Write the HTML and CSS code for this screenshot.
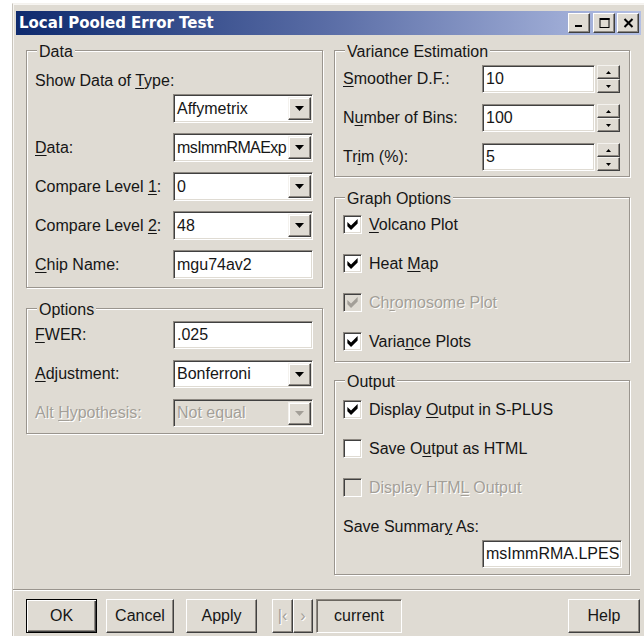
FILE: index.html
```html
<!DOCTYPE html>
<html>
<head>
<meta charset="utf-8">
<title>Local Pooled Error Test</title>
<link rel="stylesheet" href="styles.css">
</head>
<body>
<div class="window">
  <div class="titlebar">
    <span class="title">Local Pooled Error Test</span>
    <div class="caption-btns">
      <span class="cbtn"><svg width="10" height="10" viewBox="0 0 10 10"><rect x="1" y="7" width="7" height="2" fill="#000"/></svg></span>
      <span class="cbtn"><svg width="11" height="10" viewBox="0 0 11 10"><rect x="1" y="0.5" width="9" height="9" fill="none" stroke="#000" stroke-width="1"/><rect x="1" y="0" width="9.5" height="2" fill="#000"/></svg></span>
      <span class="cbtn close"><svg width="11" height="10" viewBox="0 0 11 10"><path d="M1.5 1 L9.5 9 M9.5 1 L1.5 9" stroke="#000" stroke-width="2"/></svg></span>
    </div>
  </div>

  <div class="client">
    <div class="columns">
      <!-- left column: data selection and test options -->
      <div class="col col-left">
        <fieldset class="group g-data">
          <legend>Data</legend>
          <div class="caption-line">Show Data of <u>T</u>ype:</div>
          <div class="row row-tight">
            <span class="lbl"></span>
            <div class="combo"><span class="value">Affymetrix</span><span class="drop"><svg width="9" height="5" viewBox="0 0 9 5"><path d="M0 0 H9 L4.5 5 Z" fill="#000"/></svg></span></div>
          </div>
          <div class="row">
            <span class="lbl"><u>D</u>ata:</span>
            <div class="combo"><span class="value condensed">msImmRMAExp</span><span class="drop"><svg width="9" height="5" viewBox="0 0 9 5"><path d="M0 0 H9 L4.5 5 Z" fill="#000"/></svg></span></div>
          </div>
          <div class="row">
            <span class="lbl">Compare Level <u>1</u>:</span>
            <div class="combo"><span class="value">0</span><span class="drop"><svg width="9" height="5" viewBox="0 0 9 5"><path d="M0 0 H9 L4.5 5 Z" fill="#000"/></svg></span></div>
          </div>
          <div class="row">
            <span class="lbl">Compare Level <u>2</u>:</span>
            <div class="combo"><span class="value">48</span><span class="drop"><svg width="9" height="5" viewBox="0 0 9 5"><path d="M0 0 H9 L4.5 5 Z" fill="#000"/></svg></span></div>
          </div>
          <div class="row">
            <span class="lbl"><u>C</u>hip Name:</span>
            <div class="edit wide"><span class="value">mgu74av2</span></div>
          </div>
        </fieldset>

        <fieldset class="group g-options">
          <legend>Options</legend>
          <div class="row row-first row-28">
            <span class="lbl"><u>F</u>WER:</span>
            <div class="edit wide"><span class="value">.025</span></div>
          </div>
          <div class="row row-28">
            <span class="lbl"><u>A</u>djustment:</span>
            <div class="combo"><span class="value">Bonferroni</span><span class="drop"><svg width="9" height="5" viewBox="0 0 9 5"><path d="M0 0 H9 L4.5 5 Z" fill="#000"/></svg></span></div>
          </div>
          <div class="row row-28">
            <span class="lbl disabled">Alt <u>H</u>ypothesis:</span>
            <div class="combo is-disabled"><span class="value">Not equal</span><span class="drop"><svg width="9" height="5" viewBox="0 0 9 5"><path d="M0 0 H9 L4.5 5 Z" fill="#a39f98"/></svg></span></div>
          </div>
        </fieldset>
      </div>

      <!-- right column: estimation, graphs and output -->
      <div class="col col-right">
        <fieldset class="group g-variance">
          <legend>Variance Estimation</legend>
          <div class="row row-first row-28">
            <span class="lbl lbl-r"><u>S</u>moother D.F.:</span>
            <div class="edit spin-edit"><span class="value">10</span></div>
            <div class="spin"><span class="sbtn"><svg width="5" height="3" viewBox="0 0 5 3"><path d="M0 3 H5 L2.5 0 Z" fill="#000"/></svg></span><span class="sbtn"><svg width="5" height="3" viewBox="0 0 5 3"><path d="M0 0 H5 L2.5 3 Z" fill="#000"/></svg></span></div>
          </div>
          <div class="row row-28">
            <span class="lbl lbl-r">N<u>u</u>mber of Bins:</span>
            <div class="edit spin-edit"><span class="value">100</span></div>
            <div class="spin"><span class="sbtn"><svg width="5" height="3" viewBox="0 0 5 3"><path d="M0 3 H5 L2.5 0 Z" fill="#000"/></svg></span><span class="sbtn"><svg width="5" height="3" viewBox="0 0 5 3"><path d="M0 0 H5 L2.5 3 Z" fill="#000"/></svg></span></div>
          </div>
          <div class="row row-28">
            <span class="lbl lbl-r">Tr<u>i</u>m (%):</span>
            <div class="edit spin-edit"><span class="value">5</span></div>
            <div class="spin"><span class="sbtn"><svg width="5" height="3" viewBox="0 0 5 3"><path d="M0 3 H5 L2.5 0 Z" fill="#000"/></svg></span><span class="sbtn"><svg width="5" height="3" viewBox="0 0 5 3"><path d="M0 0 H5 L2.5 3 Z" fill="#000"/></svg></span></div>
          </div>
        </fieldset>

        <fieldset class="group g-graph">
          <legend>Graph Options</legend>
          <div class="row check-row row-first">
            <span class="checkbox"><svg width="11" height="11" viewBox="0 0 7 7.5"><path d="M0 2 L2.5 4.5 L7 0 L7 3 L2.5 7.5 L0 5 Z" fill="#000"/></svg></span>
            <span class="clabel"><u>V</u>olcano Plot</span>
          </div>
          <div class="row check-row">
            <span class="checkbox"><svg width="11" height="11" viewBox="0 0 7 7.5"><path d="M0 2 L2.5 4.5 L7 0 L7 3 L2.5 7.5 L0 5 Z" fill="#000"/></svg></span>
            <span class="clabel">Heat <u>M</u>ap</span>
          </div>
          <div class="row check-row">
            <span class="checkbox is-disabled"><svg width="11" height="11" viewBox="0 0 7 7.5"><path d="M0 2 L2.5 4.5 L7 0 L7 3 L2.5 7.5 L0 5 Z" fill="#a39f98"/></svg></span>
            <span class="clabel disabled">Ch<u>r</u>omosome Plot</span>
          </div>
          <div class="row check-row">
            <span class="checkbox"><svg width="11" height="11" viewBox="0 0 7 7.5"><path d="M0 2 L2.5 4.5 L7 0 L7 3 L2.5 7.5 L0 5 Z" fill="#000"/></svg></span>
            <span class="clabel">Varia<u>n</u>ce Plots</span>
          </div>
        </fieldset>

        <fieldset class="group g-output">
          <legend>Output</legend>
          <div class="row check-row row-first">
            <span class="checkbox"><svg width="11" height="11" viewBox="0 0 7 7.5"><path d="M0 2 L2.5 4.5 L7 0 L7 3 L2.5 7.5 L0 5 Z" fill="#000"/></svg></span>
            <span class="clabel">Display <u>O</u>utput in S-PLUS</span>
          </div>
          <div class="row check-row">
            <span class="checkbox"></span>
            <span class="clabel">Save O<u>u</u>tput as HTML</span>
          </div>
          <div class="row check-row">
            <span class="checkbox is-disabled"></span>
            <span class="clabel disabled">Display HTM<u>L</u> Output</span>
          </div>
          <div class="caption-line summary-line">Save Summar<u>y</u> As:</div>
          <div class="summary-field">
            <div class="edit wide"><span class="value">msImmRMA.LPES</span></div>
          </div>
        </fieldset>
      </div>
    </div>

    <!-- dialog button bar -->
    <div class="footer">
      <span class="btn btn-default">OK</span>
      <span class="btn btn-cancel">Cancel</span>
      <span class="btn btn-apply">Apply</span>
      <span class="btn btn-nav btn-first disabled">|‹</span>
      <span class="btn btn-nav btn-next disabled">›</span>
      <span class="current">current</span>
      <span class="spacer"></span>
      <span class="btn btn-help">Help</span>
    </div>
  </div>
</div>
</body>
</html>
```

FILE: styles.css
```css
* { box-sizing: border-box; }

html, body {
  margin: 0;
  padding: 0;
  background: #ffffff;
}

body {
  font-family: "Liberation Sans", Arial, sans-serif;
  font-size: 16px;
  line-height: 20px;
  color: #161616;
}

u { text-underline-offset: 2px; }

.window {
  margin: 3px 0 0 12px;
  width: 632px;
  height: 633px;
  background: #dfdbd3;
  border-top: 1px solid #f4f2ee;
  border-left: 1px solid #c9c5bd;
  box-shadow: inset 1px 1px 0 #f7f5f2;
  overflow: hidden;
}

/* caption bar */
.titlebar {
  margin: 7px 3px 0 3px;
  height: 24px;
  display: flex;
  align-items: center;
  justify-content: space-between;
  background: linear-gradient(to right, #0e2a6e 0%, #5a6da6 50%, #b3bfe4 100%);
  padding: 0 2px 0 3px;
}

.title {
  font-family: "DejaVu Sans", Verdana, sans-serif;
  font-weight: bold;
  font-size: 15px;
  color: #ffffff;
  line-height: 24px;
}

.caption-btns {
  display: flex;
  gap: 3px;
}

.cbtn {
  width: 22px;
  height: 20px;
  display: flex;
  align-items: center;
  justify-content: center;
  background: #dfdbd3;
  border: 1px solid;
  border-color: #ffffff #404040 #404040 #ffffff;
  box-shadow: inset -1px -1px 0 #8d8881;
}

.cbtn.close { margin-left: -1px; }

/* client area */
.client {
  padding: 4px 0 0 13px;
}

.columns {
  display: flex;
  gap: 11px;
  align-items: flex-start;
}

.col { display: flex; flex-direction: column; }
.col-left { width: 297px; }
.col-right { width: 296px; }

/* etched group boxes */
.group {
  margin: 0;
  padding: 0 0 0 8px;
  border: 1px solid #9a958e;
  box-shadow: inset 1px 1px 0 #ffffff, 1px 1px 0 #ffffff;
  min-width: 0;
}

.group legend {
  margin-left: 2px;
  padding: 4px 2px 0 2px;
  line-height: 18px;
  background: #dfdbd3;
}

.g-data { padding-bottom: 8px; }
.g-options { margin-top: 9px; padding-bottom: 6px; }
.g-variance { padding-bottom: 5px; }
.g-graph { margin-top: 9px; padding-bottom: 5px; }
.g-output { margin-top: 7px; padding-bottom: 6px; }

.caption-line {
  margin-top: 10px;
  height: 20px;
}

.row {
  display: flex;
  align-items: center;
  height: 29px;
  margin-top: 10px;
}

.row-28 { height: 28px; margin-top: 11px; }
.row-tight { margin-top: 3px; }

.g-options .row-first { margin-top: 2px; }
.g-variance .row-first { margin-top: 4px; }
.g-graph .row-first { margin-top: 2px; }
.g-output .row-first { margin-top: 4px; }

.lbl {
  flex: none;
  width: 138px;
  white-space: nowrap;
}

.lbl-r { width: 139px; }

.disabled {
  color: #a39f98;
  text-shadow: 1px 1px 0 #ffffff;
}

/* sunken fields */
.edit, .combo {
  height: 100%;
  display: flex;
  align-items: center;
  background: #ffffff;
  border: 1px solid;
  border-color: #8d8881 #ffffff #ffffff #8d8881;
  box-shadow: inset 1px 1px 0 #404040, inset -1px -1px 0 #dfdbd3;
  overflow: hidden;
}

.combo, .wide { width: 140px; }

.value {
  flex: 1;
  min-width: 0;
  padding-left: 3px;
  white-space: nowrap;
  overflow: hidden;
}

.value.condensed { letter-spacing: -0.6px; }

.drop {
  flex: none;
  width: 23px;
  height: 23px;
  margin-right: 1px;
  display: flex;
  align-items: center;
  justify-content: center;
  background: #dfdbd3;
  border: 1px solid;
  border-color: #f4f2ee #404040 #404040 #f4f2ee;
  box-shadow: inset -1px -1px 0 #8d8881, inset 1px 1px 0 #ffffff;
}

.combo.is-disabled { background: #dfdbd3; }
.combo.is-disabled .value { color: #a39f98; text-shadow: 1px 1px 0 #ffffff; }

.spin-edit { width: 113px; }

.spin {
  flex: none;
  width: 23px;
  height: 28px;
  margin-left: 2px;
  display: flex;
  flex-direction: column;
}

.sbtn {
  flex: 1;
  display: flex;
  align-items: center;
  justify-content: center;
  background: #dfdbd3;
  border: 1px solid;
  border-color: #f4f2ee #404040 #404040 #f4f2ee;
  box-shadow: inset -1px -1px 0 #8d8881;
}

/* check boxes */
.check-row { gap: 7px; }

.checkbox {
  flex: none;
  width: 19px;
  height: 19px;
  display: flex;
  align-items: center;
  justify-content: center;
  background: #ffffff;
  border: 1px solid;
  border-color: #8d8881 #ffffff #ffffff #8d8881;
  box-shadow: inset 1px 1px 0 #404040, inset -1px -1px 0 #dfdbd3;
}

.checkbox.is-disabled { background: #dfdbd3; }

.summary-line { margin-top: 15px; }

.summary-field {
  height: 28px;
  margin-top: 3px;
  padding-left: 139px;
}

/* button bar */
.footer {
  margin: 14px 4px 0 0;
  padding: 8px 0 0 13px;
  margin-left: -13px;
  border-top: 1px solid #9a958e;
  box-shadow: inset 0 1px 0 #ffffff;
  display: flex;
  align-items: center;
  height: 44px;
}

.btn {
  flex: none;
  height: 34px;
  display: flex;
  align-items: center;
  justify-content: center;
  background: #dfdbd3;
  border: 1px solid;
  border-color: #ffffff #404040 #404040 #ffffff;
  box-shadow: inset -1px -1px 0 #8d8881;
}

.btn-default {
  width: 71px;
  border-color: #000000;
  box-shadow: inset 1px 1px 0 #ffffff, inset -1px -1px 0 #404040, inset -2px -2px 0 #8d8881;
}

.btn-cancel { width: 68px; margin-left: 9px; }
.btn-apply { width: 71px; margin-left: 12px; }
.btn-first { width: 21px; margin-left: 15px; }
.btn-next { width: 20px; }
.btn-help { width: 72px; }

.current {
  flex: none;
  width: 86px;
  height: 34px;
  margin-left: 3px;
  display: flex;
  align-items: center;
  justify-content: center;
  border: 1px solid;
  border-color: #8d8881 #ffffff #ffffff #8d8881;
  box-shadow: inset 1px 1px 0 #6a665f;
}

.spacer { flex: 1; }
```
